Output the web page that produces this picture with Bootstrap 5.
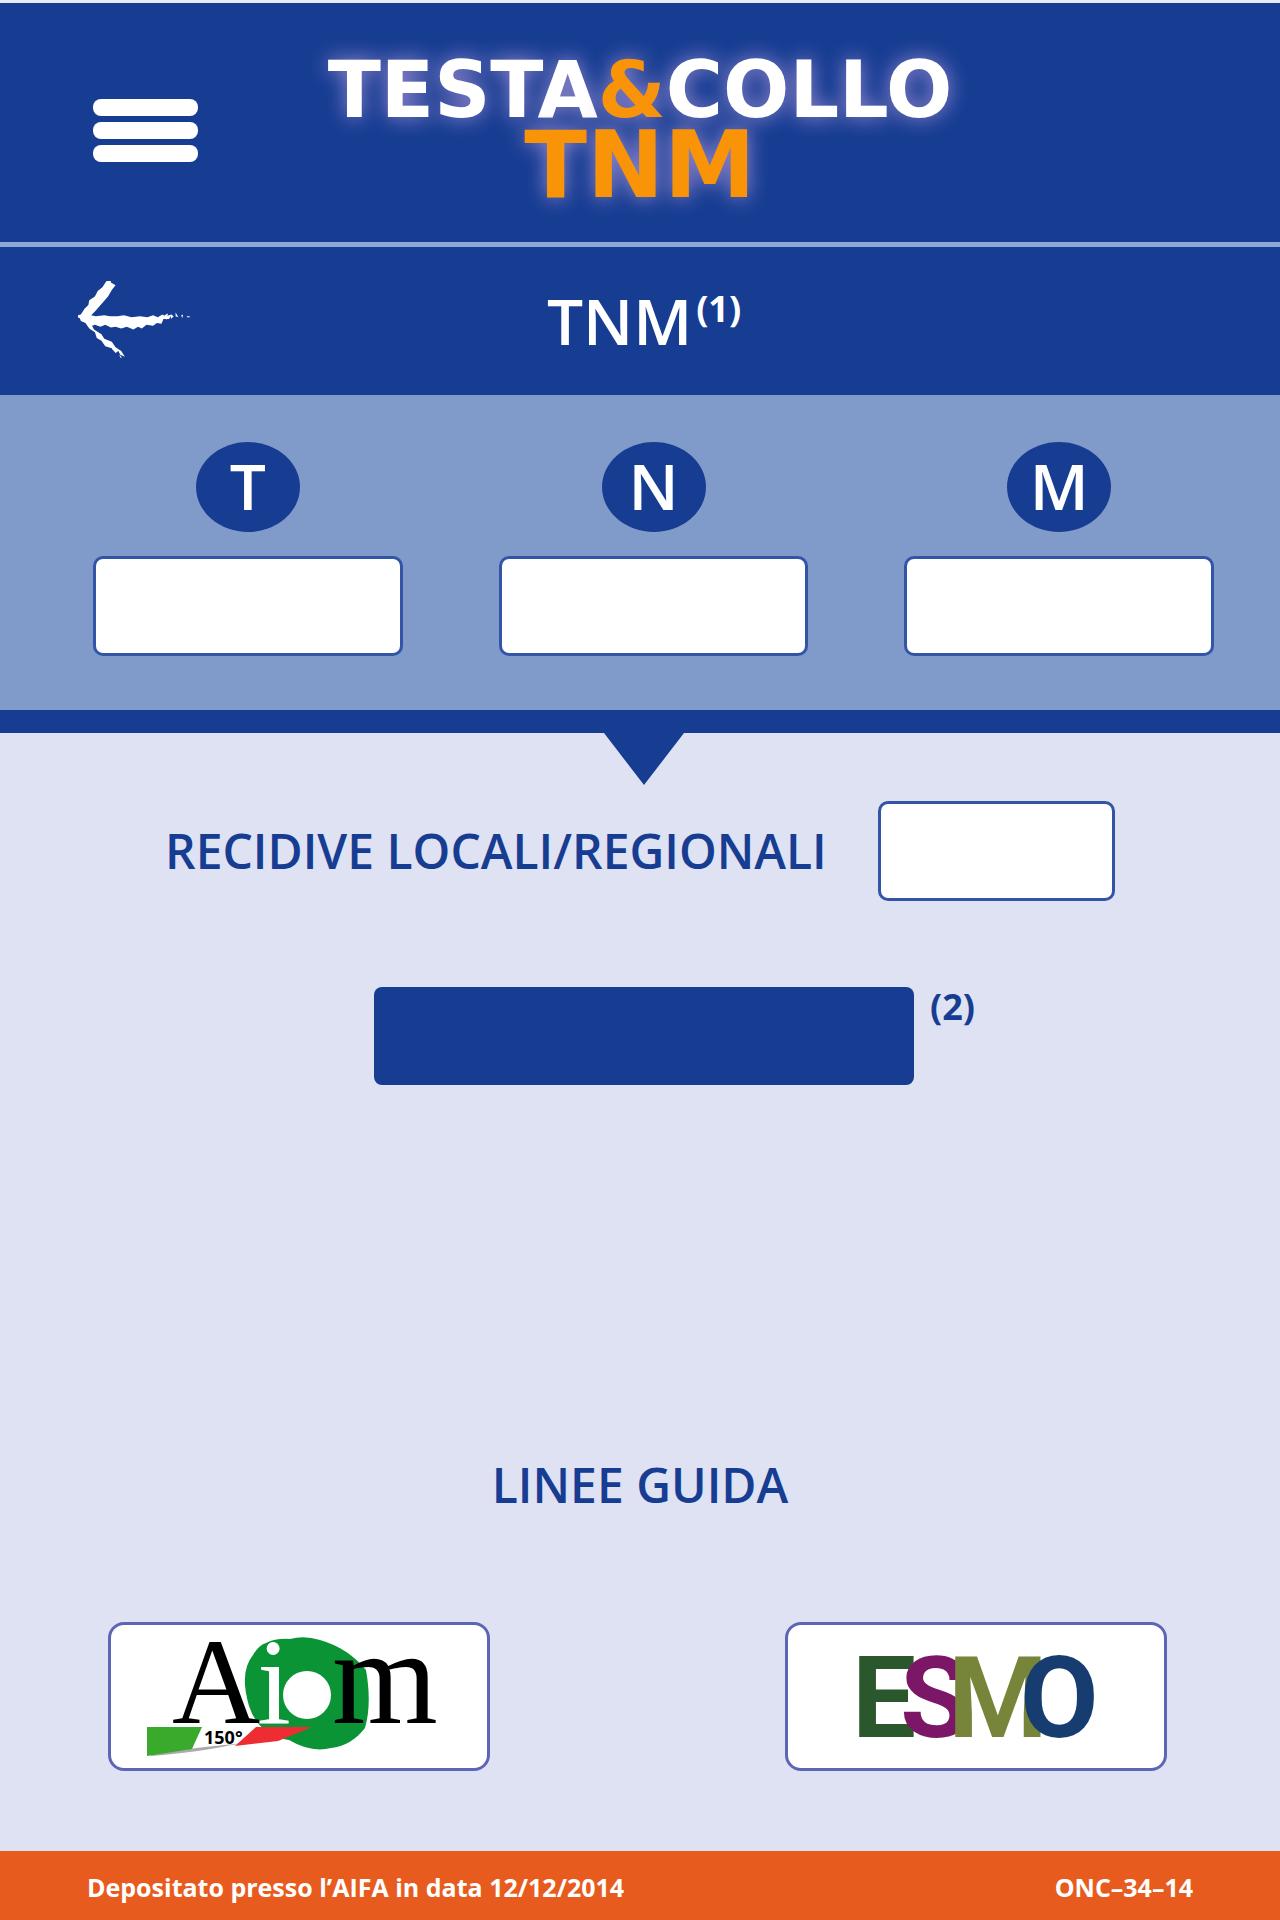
<!DOCTYPE html>
<html lang="it">
<head>
<meta charset="utf-8">
<meta name="viewport" content="width=device-width, initial-scale=1">
<title>Testa &amp; Collo TNM</title>
<link href="https://cdn.jsdelivr.net/npm/bootstrap@5.3.0/dist/css/bootstrap.min.css" rel="stylesheet">
<style>
  :root { --navy: #173d93; --steel: #809bca; --mist: #dfe2f2; --flame: #e75c1e; --amber: #f99408; }
  body { font-family: "Open Sans", "Noto Sans", sans-serif; background: var(--mist); color: var(--navy); }
  .app-top { background: var(--navy); border-top: 3px solid #e8e9f2; border-bottom: 5px solid #8aa8d8; height: 247px; }
  .side-slot { flex: 0 0 200px; }
  .brand { font: 700 78px/75px "DejaVu Sans", sans-serif; color: #fff; text-shadow: 0 0 20px rgba(190, 160, 225, .8); }
  .brand-amber { color: var(--amber); }
  .brand-tnm { font-size: 92px; }
  .page-bar { background: var(--navy); height: 148px; color: #fff; }
  .page-title { font-size: 64px; line-height: 80px; font-weight: 600; }
  .note-ref { font-size: 36px; line-height: 40px; font-weight: 700; }
  .stage-band { background: var(--steel); border-bottom: 23px solid var(--navy); padding: 47px 66px 54px 93px; }
  .stage-row { gap: 96px; }
  .stage-letter { width: 104px; height: 90px; border-radius: 50%; background: var(--navy); color: #fff; font-size: 64px; line-height: 88px; font-weight: 600; }
  .field-box { height: 100px; border: 3px solid #3355a8; border-radius: 10px; background: #fff; font-size: 40px; color: var(--navy); }
  .relapse-box { width: 237px; }
  .pointer-tip { width: 80px; height: 52px; margin-left: 4px; }
  .section-text { font-size: 48px; line-height: 60px; font-weight: 600; }
  .result-btn { width: 540px; height: 98px; border-radius: 8px; background: var(--navy); }
  .result-btn:hover { background: #214aa8; }
  .result-row { padding: 0 303px 0 374px; margin-top: 86px; }
  .relapse-row { padding: 0 165px; margin-top: 16px; }
  .guide-title { padding-bottom: 107px; }
  .guide-row { padding: 0 113px 80px 108px; }
  .guide-link { width: 382px; height: 149px; border: 3px solid #5d66b5; border-radius: 16px; background: #fff; }
  .guide-link svg { overflow: visible; }
  .app-foot { background: var(--flame); color: #fff; height: 69px; padding: 3px 87px 0; font-size: 25px; line-height: 36px; font-weight: 700; }
</style>
<script src="https://cdn.jsdelivr.net/npm/bootstrap@5.3.0/dist/js/bootstrap.bundle.min.js"></script>
</head>
<body class="d-flex flex-column min-vh-100">

<header class="app-top d-flex align-items-center">
  <div class="side-slot d-flex justify-content-end pt-3">
    <button type="button" class="btn p-0 border-0 lh-1" aria-label="Menu">
      <svg width="107" height="64" viewBox="0 0 107 64" fill="#fff"><rect x="0" y="0" width="105" height="17" rx="8"/><rect x="0" y="23" width="105" height="17" rx="8"/><rect x="0" y="46" width="105" height="17" rx="8"/></svg>
    </button>
  </div>
  <h1 class="brand flex-grow-1 text-center mb-0 pt-3 text-nowrap">TESTA<span class="brand-amber">&amp;</span>COLLO<br><span class="brand-amber brand-tnm">TNM</span></h1>
  <div class="side-slot"></div>
</header>

<div class="page-bar d-flex align-items-center">
  <div class="side-slot d-flex justify-content-end">
    <a href="#" class="d-block" aria-label="Indietro">
      <svg class="d-block" width="122" height="80" viewBox="0 0 130 84" fill="#fff">
        <path d="M35 1l5 3-4 5-4 7-7 8-7 8-4 4 5 1 9-1 6 1 8 0 7-1 8 2 9-1 8 1 6-2 5 2 5-3 3 2 7-2-3 5-6 0-2 5-5-1-4 3-7-1-5 4-4-2-5 3-7-3-6 2-6-2-5 1-6-3-5 2-6-2-3 1 2 4 8 5 3 5 8 3 4 6 6 4 4 6-5-2-2-4-3 2-4-5-7-2-4-6-5-3-2-6-6-4-4-6-5-2-1-3-5-2 6-2 4-6 4-4 1-5 6-4 3-6 5-4 4-6 5-5z"/>
        <path d="M92 36l4-2-2 7zM99 35l3 2-3 3zM104 33l3 5-3-1zM110 36l2-1-1 4zM116 37h3v1h-3zM26 62l3 2-2 1zM36 70l4 4-3-1zM31 65l3 4-3-2zM44 78l3 3-2 0z"/>
      </svg>
    </a>
  </div>
  <h2 class="page-title flex-grow-1 d-flex justify-content-center mb-0 ps-2"><span>TNM</span><sup class="note-ref top-0 pt-2 ps-1">(1)</sup></h2>
  <div class="side-slot"></div>
</div>

<section class="stage-band">
  <div class="stage-row d-flex">
    <div class="flex-fill d-flex flex-column align-items-center">
      <label class="stage-letter text-center" for="stageT">T</label>
      <input class="field-box w-100 px-3 mt-4" id="stageT" type="text">
    </div>
    <div class="flex-fill d-flex flex-column align-items-center">
      <label class="stage-letter text-center" for="stageN">N</label>
      <input class="field-box w-100 px-3 mt-4" id="stageN" type="text">
    </div>
    <div class="flex-fill d-flex flex-column align-items-center">
      <label class="stage-letter text-center" for="stageM">M</label>
      <input class="field-box w-100 px-3 mt-4" id="stageM" type="text">
    </div>
  </div>
</section>

<main class="flex-grow-1 d-flex flex-column">
  <div class="d-flex justify-content-center ps-1">
    <svg class="pointer-tip" viewBox="0 0 80 52" aria-hidden="true"><path d="M0 0h80L40 52z" fill="#173d93"/></svg>
  </div>
  <div class="relapse-row d-flex align-items-center justify-content-between">
    <label class="section-text text-nowrap" for="relapse">RECIDIVE LOCALI/REGIONALI</label>
    <input class="field-box relapse-box px-3" id="relapse" type="text">
  </div>
  <div class="result-row d-flex">
    <button type="button" class="btn result-btn flex-shrink-0" aria-label="Risultato"></button>
    <span class="note-ref ps-3">(2)</span>
  </div>
  <h2 class="section-text guide-title text-center mb-0 mt-auto">LINEE GUIDA</h2>
  <div class="guide-row d-flex justify-content-between">
    <a href="#" class="guide-link d-flex align-items-center justify-content-center" aria-label="Aiom">
      <svg width="376" height="143" viewBox="0 0 376 143" font-family="'Liberation Serif', serif" font-size="122">
        <path d="M155 18q10-5 24-4 14-4 30 1 28 8 46 30 6 34-1 58-14 18-34 20-20 5-42-8-30-4-40-34-10-34 4-51 6-10 13-12z" fill="#0b9436"/>
        <circle cx="196" cy="70" r="24" fill="#fff"/>
        <text x="61" y="98" fill="#000">A</text>
        <text x="146" y="98" fill="#fff">i</text>
        <text x="221" y="98" fill="#000" font-size="136">m</text>
        <path d="M40 131q50-4 80-11l52-5q-70 5-132 14z" fill="#aaa"/>
        <path d="M36 102h55l-10 22-45 7z" fill="#3aaa2c"/>
        <path d="M145 102h56l-34 14-43 5z" fill="#ee2d32"/>
        <text x="93" y="119" fill="#000" font-family="'Open Sans', sans-serif" font-size="18" font-weight="700">150°</text>
      </svg>
    </a>
    <a href="#" class="guide-link d-flex align-items-center justify-content-center" aria-label="ESMO">
      <svg width="376" height="143" viewBox="0 0 376 143" font-family="Roboto, sans-serif" font-size="114" font-weight="700">
        <text x="64" y="112" fill="#2b572d">E</text>
        <text x="112" y="112" fill="#7b1766">S</text>
        <text x="160" y="112" fill="#76853a">M</text>
        <text x="232" y="112" fill="#163c70">O</text>
      </svg>
    </a>
  </div>
</main>

<footer class="app-foot d-flex align-items-center justify-content-between">
  <span>Depositato presso l’AIFA in data 12/12/2014</span>
  <span>ONC–34–14</span>
</footer>
</body>
</html>
